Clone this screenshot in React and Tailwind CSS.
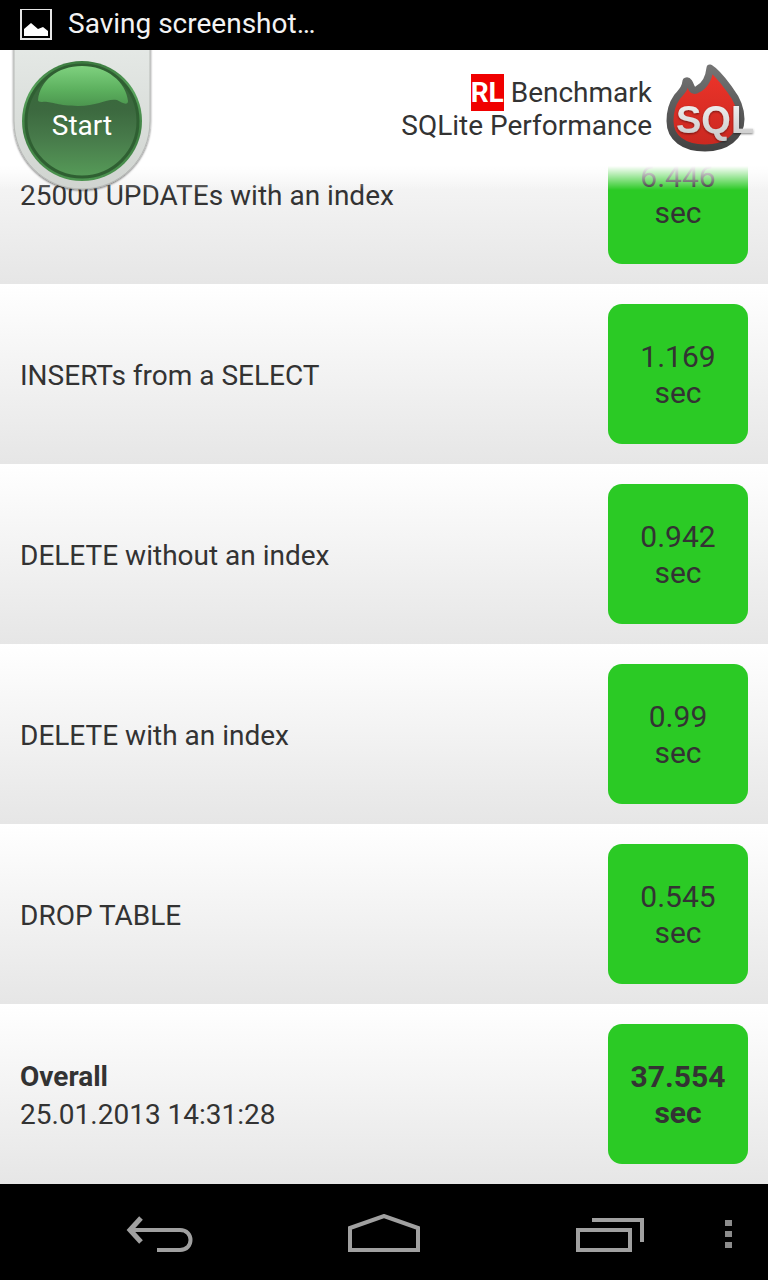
const results = [
    { name: "25000 UPDATEs with an index", time: "6.446" },
    { name: "INSERTs from a SELECT", time: "1.169" },
    { name: "DELETE without an index", time: "0.942" },
    { name: "DELETE with an index", time: "0.99" },
    { name: "DROP TABLE", time: "0.545" },
    { name: "Overall", time: "37.554", date: "25.01.2013 14:31:28", total: true },
]

function StatusBar() {
    return (
        <div className="flex h-[50px] items-center gap-4 bg-black px-5 text-[28px] leading-8 text-[#f3f3f3]">
            <svg width="32" height="32" viewBox="0 0 32 32" aria-hidden="true">
                <rect x="1" y="0" width="30" height="30" fill="none" stroke="#e6e6e6" strokeWidth="2" />
                <path d="M4 27V20L11 14L18 20L23 18L28 22V27Z" fill="#fff" />
            </svg>
            <span className="pb-0.5">Saving screenshot…</span>
        </div>
    )
}

function StartButton() {
    return (
        <button className="relative h-[144px] w-[144px] text-[28px] leading-8 text-white">
            <svg className="block" width="144" height="144" viewBox="0 0 144 144" aria-hidden="true">
                <defs>
                    <linearGradient id="plate" x1="0" y1="0" x2="0" y2="1">
                        <stop offset="0" stopColor="#e5e9e6" />
                        <stop offset="1" stopColor="#d0d4d0" />
                    </linearGradient>
                    <linearGradient id="rim" x1="0" y1="0" x2="0" y2="1">
                        <stop offset="0" stopColor="#3a7a3e" />
                        <stop offset="0.25" stopColor="#59a45d" />
                        <stop offset="0.6" stopColor="#3f7f43" />
                        <stop offset="1" stopColor="#4c9450" />
                    </linearGradient>
                    <linearGradient id="ball" x1="0" y1="0" x2="0" y2="1">
                        <stop offset="0" stopColor="#356838" />
                        <stop offset="0.4" stopColor="#3c693f" />
                        <stop offset="0.65" stopColor="#477a4a" />
                        <stop offset="1" stopColor="#569b58" />
                    </linearGradient>
                    <linearGradient id="gloss" x1="0" y1="0" x2="0" y2="1">
                        <stop offset="0" stopColor="#7fd17f" />
                        <stop offset="0.6" stopColor="#5cb05e" />
                        <stop offset="1" stopColor="#4c964f" />
                    </linearGradient>
                    <filter id="plateShadow" x="-10%" y="-10%" width="120%" height="120%">
                        <feDropShadow dx="0" dy="1" stdDeviation="1" floodColor="#000" floodOpacity="0.6" />
                    </filter>
                </defs>
                <path
                    d="M4 -6H140V71C140 109 110 139 72 139C34 139 4 109 4 71Z"
                    fill="url(#plate)"
                    stroke="#b7bab7"
                    filter="url(#plateShadow)"
                />
                <circle cx="72" cy="71" r="60" fill="url(#rim)" />
                <circle cx="72" cy="71" r="56" fill="url(#ball)" stroke="#2f5f32" strokeWidth="3" />
                <path
                    d="M28 50C30 31 47 16 72 16C97 16 116 32 118 51C118 56 112 53 107 50C97 48 88 56 68 56C46 56 42 51 32 52C29 52 28 51 28 50Z"
                    fill="url(#gloss)"
                />
            </svg>
            <span className="absolute inset-0 flex items-center justify-center pt-2">Start</span>
        </button>
    )
}

function Logo() {
    return (
        <svg width="92" height="96" viewBox="0 0 92 96" role="img" aria-label="SQL">
            <defs>
                <linearGradient id="flameRim" x1="0" y1="0" x2="0" y2="1">
                    <stop offset="0" stopColor="#747474" />
                    <stop offset="1" stopColor="#434343" />
                </linearGradient>
                <linearGradient id="flame" x1="0" y1="0" x2="0" y2="1">
                    <stop offset="0" stopColor="#ee342a" />
                    <stop offset="1" stopColor="#c92820" />
                </linearGradient>
                <linearGradient id="letters" x1="0" y1="0" x2="0" y2="1">
                    <stop offset="0" stopColor="#f4f4f4" />
                    <stop offset="1" stopColor="#c8c8c8" />
                </linearGradient>
                <filter id="letterShadow">
                    <feDropShadow dx="0" dy="1" stdDeviation="1" floodColor="#000" floodOpacity="0.5" />
                </filter>
            </defs>
            <path
                d="M46 8C54 13 60 22 66 30C73 39 77 47 77 59C77 77 62 88 41 88C20 88 6 78 6 61C6 52 8 44 13 37C18 31 21 29 22 21C25 20 26 24 28 29Q30 32 34 29C42 25 45 17 46 8Z"
                fill="url(#flame)"
                stroke="url(#flameRim)"
                strokeWidth="7"
                strokeLinejoin="round"
            />
            <text
                x="12"
                y="73"
                fontFamily="Liberation Sans, sans-serif"
                fontSize="38"
                fontWeight="700"
                fill="url(#letters)"
                filter="url(#letterShadow)"
            >
                SQL
            </text>
        </svg>
    )
}

function Header() {
    return (
        <header className="relative z-10 flex h-[116px] justify-between bg-white pl-[10px] pr-3">
            <div className="absolute inset-x-0 top-full h-6 bg-linear-to-b from-white to-white/0" />
            <StartButton />
            <div className="flex h-full items-center gap-3">
                <h1 className="pt-0.5 text-right text-[28px] leading-[33px] text-[#333]">
                    <span className="bg-[#f00000] py-0.5 font-bold text-white">RL</span> Benchmark
                    <br />
                    SQLite Performance
                </h1>
                <Logo />
            </div>
        </header>
    )
}

function ResultRow({ result }) {
    return (
        <tr className="h-[180px] bg-linear-to-b from-white to-[#e6e6e6]">
            <th scope="row" className="pt-1 pl-5 text-left text-[28px] leading-[38px] font-normal">
                <span className={result.total ? "font-bold" : ""}>{result.name}</span>
                {result.date && <span className="block">{result.date}</span>}
            </th>
            <td className="w-[180px] p-5">
                <div
                    className={`flex h-[140px] flex-col justify-center rounded-[14px] bg-[#2bca25] pt-0.5 text-center text-[30px] leading-9 ${result.total ? "font-bold" : ""}`}
                >
                    <span>{result.time}</span>
                    <span>sec</span>
                </div>
            </td>
        </tr>
    )
}

function NavBar() {
    return (
        <nav className="mt-auto flex h-24 items-center bg-black pt-1 pl-12 text-[#a0a0a0]">
            <button className="flex h-full flex-1 items-center justify-center" aria-label="Back">
                <svg width="68" height="40" viewBox="0 0 68 40" fill="none" stroke="currentColor" strokeWidth="4">
                    <path d="M4 16H54C68 16 68 36 54 36H31" />
                    <path d="M15 4L4 16L15 28" strokeWidth="5" />
                </svg>
            </button>
            <button className="flex h-full flex-1 items-center justify-center" aria-label="Home">
                <svg width="72" height="40" viewBox="0 0 72 40" fill="none" stroke="currentColor" strokeWidth="4">
                    <path d="M2 36V14L36 2L70 14V36Z" />
                </svg>
            </button>
            <button className="flex h-full flex-1 items-center justify-center" aria-label="Recent apps">
                <svg width="72" height="40" viewBox="0 0 72 40" fill="none" stroke="currentColor" strokeWidth="4">
                    <rect x="6" y="16" width="52" height="20" />
                    <path d="M20 6H70V28" />
                </svg>
            </button>
            <button className="flex h-full w-12 items-center pl-1" aria-label="Menu">
                <svg width="10" height="30" viewBox="0 0 10 30" fill="#8c8c8c">
                    <rect x="1" y="1" width="7" height="6" />
                    <rect x="1" y="12" width="7" height="6" />
                    <rect x="1" y="23" width="7" height="6" />
                </svg>
            </button>
        </nav>
    )
}

export default function App() {
    return (
        <div className="flex min-h-screen flex-col bg-white font-['Roboto',sans-serif] text-[#333]">
            <StatusBar />
            <Header />
            {/* The list is scrolled, so its first row starts under the header */}
            <main className="-mt-[62px]">
                <table className="w-full border-collapse">
                    <tbody>
                        {results.map((result) => (
                            <ResultRow key={result.name} result={result} />
                        ))}
                    </tbody>
                </table>
            </main>
            <NavBar />
        </div>
    )
}
